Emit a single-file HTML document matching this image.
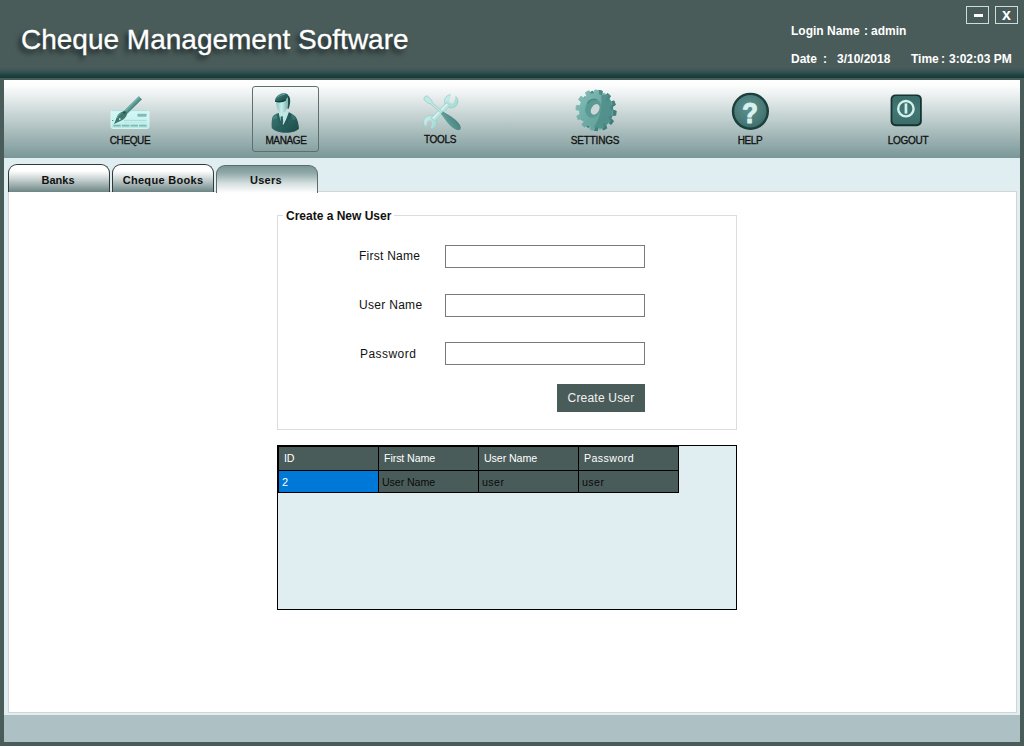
<!DOCTYPE html>
<html>
<head>
<meta charset="utf-8">
<title>Cheque Management Software</title>
<style>
html,body{margin:0;padding:0;}
body{width:1024px;height:748px;overflow:hidden;background:#fff;font-family:"Liberation Sans",Arial,sans-serif;position:relative;}
.abs{position:absolute;}
#win{position:absolute;left:0;top:0;width:1024px;height:746px;background:#4a5c5a;}
#title{position:absolute;left:21px;top:24px;font-size:28px;line-height:32px;color:#fff;white-space:nowrap;-webkit-text-stroke:0.3px #fff;text-shadow:-3px 4px 5px rgba(15,25,25,0.9);}
#band{position:absolute;left:0;top:67px;width:1024px;height:11px;background:linear-gradient(to bottom,#4a5c5a 0%,#3c5554 35%,#1a4240 80%,#133a38 100%);}
.hl{position:absolute;font-size:12px;font-weight:bold;color:#fff;line-height:14px;white-space:nowrap;}
.wbtn{position:absolute;top:6px;width:21px;height:16px;border:1px solid #cfdcdb;color:#fff;}
#toolbar{position:absolute;left:4px;top:80px;width:1016px;height:78px;background:linear-gradient(to bottom,#ffffff 0%,#fbfcfc 8%,#b9c9c9 55%,#7a9798 100%);}
.tl{position:absolute;-webkit-text-stroke:0.3px #111;font-size:10px;line-height:12px;color:#111;white-space:nowrap;text-align:center;}
#content{position:absolute;left:4px;top:158px;width:1016px;height:557px;background:#e0eef2;}
#status{position:absolute;left:4px;top:715px;width:1016px;height:27px;background:#adc0c3;}
#panel{position:absolute;left:8px;top:191px;width:1007px;height:520px;background:#fff;border:1px solid #d4d4d4;}
.tab{position:absolute;width:100px;border:1px solid #2f3a3a;border-bottom:none;border-radius:9px 9px 0 0;font-size:11px;font-weight:bold;color:#111;text-align:center;white-space:nowrap;}
.tab.in{top:164px;height:27px;line-height:30px;background:linear-gradient(to bottom,#ffffff 0%,#ffffff 22%,#c4cece 55%,#6d8585 100%);}
.tab.act{top:165px;height:27px;line-height:28px;border-color:#5d6b6b;background:linear-gradient(to bottom,#7a9697 0%,#8fa8a8 25%,#d5dfdf 65%,#ffffff 100%);}
#gb{position:absolute;left:277px;top:215px;width:458px;height:213px;border:1px solid #dcdcdc;}
#gbt{position:absolute;left:283px;top:209px;padding:0 3px;background:#fff;font-size:12px;font-weight:bold;line-height:14px;color:#111;white-space:nowrap;}
.lbl{position:absolute;font-size:12px;line-height:14px;color:#111;white-space:nowrap;letter-spacing:0.14px;}
.inp{position:absolute;left:445px;width:198px;height:21px;border:1px solid #7a7a7a;background:#fff;}
#btn{position:absolute;left:557px;top:384px;width:88px;height:28px;background:#4a5c5a;color:#f2f2f2;font-size:12px;line-height:29px;text-align:center;letter-spacing:0.2px;}
#grid{position:absolute;left:277px;top:445px;width:458px;height:163px;border:1px solid #000;background:#e0eef2;}
.gc{position:absolute;width:99px;background:#4a5c5a;font-size:10.67px;white-space:nowrap;letter-spacing:-0.1px;}
.gh{top:447px;height:23px;line-height:23px;color:#fff;padding-left:5px;width:94px;}
.gr{top:471px;height:21px;line-height:23px;color:#0a0a0a;padding-left:3px;width:96px;}
</style>
</head>
<body>
<div id="win">
  <div id="title">Cheque Management Software</div>
  <div id="band"></div>

  <div class="hl" style="left:791px;top:24px;">Login Name</div>
  <div class="hl" style="left:864px;top:24px;">:</div>
  <div class="hl" style="left:871px;top:24px;">admin</div>
  <div class="hl" style="left:791px;top:52px;">Date</div>
  <div class="hl" style="left:823px;top:52px;">:</div>
  <div class="hl" style="left:837px;top:52px;">3/10/2018</div>
  <div class="hl" style="left:911px;top:52px;">Time</div>
  <div class="hl" style="left:941px;top:52px;">:</div>
  <div class="hl" style="left:949px;top:52px;">3:02:03 PM</div>

  <div class="wbtn" style="left:966px;"><div class="abs" style="left:7px;top:6.5px;width:9px;height:3px;background:#fff;"></div></div>
  <div class="wbtn" style="left:995px;"><div class="abs" style="left:0;top:1px;width:21px;height:16px;line-height:14px;text-align:center;font-size:16px;font-weight:bold;">x</div></div>

  <div id="toolbar"></div>
  <div id="content"></div>
  <div id="status"></div>
</div>

<!-- toolbar items -->
<div class="abs" style="left:252px;top:86px;width:65px;height:64px;border:1px solid #5f6e6e;border-radius:3px;"></div>

<div class="tl" style="left:100px;top:135px;width:60px;letter-spacing:-0.4px;">CHEQUE</div>
<div class="tl" style="left:256px;top:135px;width:60px;letter-spacing:-0.35px;">MANAGE</div>
<div class="tl" style="left:410px;top:134px;width:60px;letter-spacing:-0.3px;">TOOLS</div>
<div class="tl" style="left:565px;top:135px;width:60px;letter-spacing:-0.2px;">SETTINGS</div>
<div class="tl" style="left:720px;top:135px;width:60px;letter-spacing:-0.4px;">HELP</div>
<div class="tl" style="left:878px;top:135px;width:60px;letter-spacing:-0.3px;">LOGOUT</div>

<!-- ICONS -->
<svg class="abs" style="left:0;top:80px;" width="1024" height="80" viewBox="0 80 1024 80">
<defs>
  <linearGradient id="gCard" x1="0" y1="0" x2="0" y2="1"><stop offset="0" stop-color="#d4f8f5"/><stop offset="0.6" stop-color="#c8f3ef"/><stop offset="1" stop-color="#b4e8e2"/></linearGradient>
  <linearGradient id="gPen" x1="0" y1="0" x2="1" y2="1"><stop offset="0" stop-color="#66a39e"/><stop offset="1" stop-color="#3c7772"/></linearGradient>
  <linearGradient id="gJacket" x1="0" y1="0" x2="1" y2="1"><stop offset="0" stop-color="#3f7c78"/><stop offset="0.5" stop-color="#2a615e"/><stop offset="1" stop-color="#1b4a48"/></linearGradient>
  <linearGradient id="gFace" x1="0" y1="0" x2="1" y2="0"><stop offset="0" stop-color="#8cc3be"/><stop offset="0.45" stop-color="#c4ece8"/><stop offset="1" stop-color="#7fb6b1"/></linearGradient>
  <linearGradient id="gHair" x1="0" y1="0" x2="1" y2="1"><stop offset="0" stop-color="#5c9a95"/><stop offset="0.5" stop-color="#2b6461"/><stop offset="1" stop-color="#173f3d"/></linearGradient>
  <linearGradient id="gWrench" x1="0" y1="0" x2="1" y2="1"><stop offset="0" stop-color="#d2f3f0"/><stop offset="0.5" stop-color="#b4e2de"/><stop offset="1" stop-color="#a3d6d1"/></linearGradient>
  <linearGradient id="gHandle" x1="0" y1="1" x2="1" y2="0"><stop offset="0" stop-color="#6aa7a2"/><stop offset="0.5" stop-color="#55928d"/><stop offset="1" stop-color="#477f7b"/></linearGradient>
  <linearGradient id="gGearF" x1="0" y1="0" x2="1" y2="1"><stop offset="0" stop-color="#86c0ba"/><stop offset="0.5" stop-color="#6eaba5"/><stop offset="1" stop-color="#5a9893"/></linearGradient>
  <linearGradient id="gGearB" x1="0" y1="0" x2="1" y2="1"><stop offset="0" stop-color="#5a9893"/><stop offset="1" stop-color="#3a7672"/></linearGradient>
  <radialGradient id="gHelp" cx="0.45" cy="0.4" r="0.65"><stop offset="0" stop-color="#5f918e"/><stop offset="0.7" stop-color="#477875"/><stop offset="1" stop-color="#376663"/></radialGradient>
  <linearGradient id="gLog" x1="0" y1="0" x2="0" y2="1"><stop offset="0" stop-color="#3a6c69"/><stop offset="0.5" stop-color="#437774"/><stop offset="1" stop-color="#3b6e6b"/></linearGradient>
</defs>

<!--ICON_CHEQUE-->
<g id="ic-cheque">
  <rect x="111" y="110.5" width="38" height="18" rx="1.8" fill="url(#gCard)" stroke="#dffaf7" stroke-width="0.8"/>
  <line x1="112" y1="110.6" x2="148" y2="110.6" stroke="#a5d6d1" stroke-width="0.8"/>
  <rect x="137.4" y="113.7" width="9.1" height="3" rx="0.6" fill="#82bbb6"/>
  <line x1="124" y1="120.4" x2="146.5" y2="120.4" stroke="#a3d6d1" stroke-width="0.9"/>
  <line x1="124" y1="122.4" x2="146.5" y2="122.4" stroke="#b9e5e1" stroke-width="0.7"/>
  <line x1="113.3" y1="125.6" x2="146.5" y2="125.6" stroke="#7eb7b2" stroke-width="1.7" stroke-dasharray="7.4,1.2"/>
  <rect x="112.2" y="120" width="1" height="1" fill="#3c6f6b"/>
  <line x1="140.3" y1="97.8" x2="124.6" y2="113.2" stroke="#5a9893" stroke-width="4.3" stroke-linecap="butt"/>
  <line x1="139.4" y1="96.9" x2="123.7" y2="112.3" stroke="#74b0aa" stroke-width="1.2"/>
  <line x1="141.3" y1="98.9" x2="125.6" y2="114.3" stroke="#4a8682" stroke-width="1.2"/>
  <path d="M126.6,111.6 C128.2,114.3 125.3,119.2 121.0,120.8 L114.0,123.9 L116.8,117.2 C118.4,112.8 123.2,110.0 126.6,111.6Z" fill="#40776f"/>
  <path d="M121.5,113.0 C119.5,114.0 118.0,116.0 117.4,118.0" fill="none" stroke="#6da9a4" stroke-width="0.9"/>
  <circle cx="124.3" cy="112.6" r="1.1" fill="#1f4b48"/>
  <path d="M119.2,117.9 L121.2,119.0 L119.0,120.3Z" fill="#d8f4f1"/>
</g>

<!--ICON_MANAGE-->
<g id="ic-manage">
  <!-- jacket -->
  <path d="M278.6,113.0 C275,114.0 272.8,115.4 272.2,118 C271.6,121.5 271.4,125 271.8,128 C274,130.8 280,132.8 286,132.8 C292,132.8 297,131.4 299,128.6 C298.6,124 297.6,119.5 295.8,117 C294,114.8 291,113.2 288.6,112.2 L284,120 Z" fill="url(#gJacket)"/>
  <path d="M273.2,117.6 C274.4,115.8 276.4,114.8 278.2,114.4 L279.6,118 C277,118 274.6,118.4 273.2,119.6 Z" fill="#4f8d88" opacity="0.8"/>
  <path d="M291,114.4 C293.4,115.4 295.2,116.8 296,118.8 L293,120.6 Z" fill="#3d7a76" opacity="0.8"/>
  <!-- shirt -->
  <path d="M278.8,112.4 L288.8,111.6 L289.2,114 L283.4,125 L279.2,119 Z" fill="#bfe6e2"/>
  <path d="M280.6,116.4 L282.8,116.2 L283.2,122.6 L282.2,124.4 L280.6,122.4Z" fill="#2c6461"/>
  <path d="M278.6,113 L281,122.6 L282.6,125.6 L280.4,126.4 L276.6,115.6 Z" fill="#2a615e"/>
  <path d="M288.8,112.2 L285.4,121.4 L283.2,125.6 L285.2,127 L291.6,114.4 Z" fill="#245956"/>
  <!-- face -->
  <path d="M276.4,101 C276,105.5 277,109.8 279.4,112.2 C280.8,113.6 283.2,113.4 284.6,112 C286.6,110 287.6,106.5 287.8,102.5 L285.5,99.2 L277.4,99.8 Z" fill="url(#gFace)"/>
  <!-- hair back strip -->
  <path d="M286,95 C288.6,94.6 290.2,97 290.2,100.4 C290.2,103.6 289.6,106.6 288.4,109 L287.2,108.2 C288,104.4 288.2,100.6 287.4,98 Z" fill="#1f4f4c"/>
  <!-- ear/temple -->
  <path d="M284.8,99.6 L287.2,96.6 C288.4,99.6 288.4,104.6 287.2,108.4 L285.6,108.6 C286.4,105.6 286.2,102.2 284.8,99.6 Z" fill="#83bbb6"/>
  <!-- hair cap -->
  <path d="M275.0,101.6 C274.6,98.8 277.0,95.2 281.4,93.6 C284.0,92.8 286.8,93.2 288.4,95.2 L285.4,100.4 C282.6,101.9 278.2,102.3 275.0,101.6 Z" fill="url(#gHair)"/>
  <path d="M275.2,101.2 C278.4,102.2 282.8,101.8 285.6,100.2" fill="none" stroke="#123a38" stroke-width="1.2"/>
  <path d="M277.6,97.2 C279.6,95.2 282.6,94.2 285,94.4" fill="none" stroke="#6fada8" stroke-width="1" opacity="0.8"/>
</g>

<!--ICON_TOOLS-->
<g id="ic-tools" transform="translate(0.6,1.3)">
  <mask id="mW" maskUnits="userSpaceOnUse" x="415" y="85" width="55" height="55">
    <rect x="415" y="85" width="55" height="55" fill="#fff"/>
    <path d="M-2.5,-14 L2.5,-14 L2.5,0 A2.5,2.5 0 0 1 -2.5,0 Z" transform="translate(451.2,99.6) rotate(14)" fill="#000"/>
    <path d="M-2.5,-14 L2.5,-14 L2.5,0 A2.5,2.5 0 0 1 -2.5,0 Z" transform="translate(429.0,121.6) rotate(194)" fill="#000"/>
  </mask>
  <g mask="url(#mW)">
    <circle cx="450.6" cy="100.0" r="6.7" fill="url(#gWrench)" stroke="#93c8c3" stroke-width="0.7"/>
    <circle cx="429.6" cy="121.0" r="6.7" fill="url(#gWrench)" stroke="#93c8c3" stroke-width="0.7"/>
    <path d="M446.2,101.0 L449.6,104.4 L434.0,120.0 L430.6,116.6 Z" fill="#b7e4e0" stroke="#93c8c3" stroke-width="0.6"/>
    <path d="M446.6,102.6 L432.2,117.0" stroke="#dbf6f3" stroke-width="1.4" fill="none"/>
  </g>
  <g transform="translate(441.8,111.8) rotate(42.5)">
    <path d="M-23.8,-1.4 L-22.6,-2.5 L-17,-2.4 L-14.6,-1 L0,-1 L0,1 L-14.6,1 L-17,2.4 L-22.6,2.5 L-23.8,1.4 Z" fill="#bfe9e5" stroke="#8fc4bf" stroke-width="0.6"/>
    <path d="M-0.6,-1.5 C3,-2.2 7,-3.2 12,-3.8 C17.5,-4.4 24.2,-3.3 24.2,0 C24.2,3.3 17.5,4.4 12,3.8 C7,3.2 3,2.2 -0.6,1.5 Z" fill="url(#gHandle)"/>
  </g>
</g>

<!--ICON_SETTINGS-->
<g id="ic-gear">
  <path d="M612.8,110.2 L616.2,111.1 L615.7,115.3 L612.2,115.2 L611.0,118.5 L613.5,121.1 L611.2,124.5 L608.3,122.4 L605.7,124.6 L606.7,128.3 L603.2,130.0 L601.5,126.5 L598.3,127.0 L597.5,130.8 L593.8,130.2 L593.9,126.4 L590.9,125.0 L588.5,127.8 L585.5,125.3 L587.3,122.0 L585.3,119.1 L582.0,120.3 L580.6,116.4 L583.6,114.5 L583.2,111.0 L579.8,110.1 L580.3,105.9 L583.8,106.0 L585.0,102.7 L582.5,100.1 L584.8,96.7 L587.7,98.8 L590.3,96.6 L589.3,92.9 L592.8,91.2 L594.5,94.7 L597.7,94.2 L598.5,90.4 L602.2,91.0 L602.1,94.8 L605.1,96.2 L607.5,93.4 L610.5,95.9 L608.7,99.2 L610.7,102.1 L614.0,100.9 L615.4,104.8 L612.4,106.7Z" fill="url(#gGearB)" stroke="#3f7b77" stroke-width="1" stroke-linejoin="round"/>
  <path d="M609.2,109.8 L612.7,110.7 L612.2,114.9 L608.6,114.8 L607.4,118.1 L610.0,120.8 L607.7,124.2 L604.6,122.1 L602.0,124.3 L603.1,128.0 L599.5,129.7 L597.9,126.2 L594.6,126.7 L593.8,130.5 L590.0,129.9 L590.2,126.0 L587.1,124.7 L584.7,127.5 L581.6,124.9 L583.6,121.6 L581.6,118.8 L578.1,119.9 L576.7,116.0 L579.8,114.2 L579.4,110.6 L575.9,109.7 L576.4,105.5 L580.0,105.6 L581.2,102.3 L578.6,99.6 L580.9,96.2 L584.0,98.3 L586.6,96.1 L585.5,92.4 L589.1,90.7 L590.7,94.2 L594.0,93.7 L594.8,89.9 L598.6,90.5 L598.4,94.4 L601.5,95.7 L603.9,92.9 L607.0,95.5 L605.0,98.8 L607.0,101.6 L610.5,100.5 L611.9,104.4 L608.8,106.2Z" fill="url(#gGearF)" stroke="#7ab6b0" stroke-width="0.8" stroke-linejoin="round"/>
  <path d="M593.6,127.2 C599.5,120 602.5,108 601.2,95.6 L606.6,94.6 L611.0,101.0 L612.8,111.4 L609.8,121.4 L602.6,128.6 Z" fill="#4d8c87" opacity="0.8"/>
  <ellipse cx="593.2" cy="108.4" rx="7.8" ry="9.6" transform="rotate(24 593.2 108.4)" fill="#5b9994"/>
  <path d="M587.4,103.6 C589.4,99.8 593.4,98.4 596.8,99.8" fill="none" stroke="#4a8883" stroke-width="1.4"/>
  <ellipse cx="595.2" cy="109.4" rx="3.9" ry="5.7" transform="rotate(30 595.2 109.4)" fill="#ccd8d8"/>
</g>

<!--ICON_HELP-->
<g id="ic-help">
  <circle cx="750.4" cy="111.3" r="17.4" fill="url(#gHelp)" stroke="#1a3f3c" stroke-width="2.4"/>
  <text transform="translate(750.1,112.6) scale(0.95,1.07)" x="0" y="9.6" text-anchor="middle" font-family="'Liberation Sans',Arial,sans-serif" font-weight="bold" font-size="27" fill="#d9f1ee" stroke="#d9f1ee" stroke-width="1.1" stroke-linejoin="round">?</text>
</g>

<!--ICON_LOGOUT-->
<g id="ic-logout">
  <rect x="890.6" y="94.4" width="31.2" height="31.8" rx="5" fill="#153431"/>
  <rect x="892.4" y="96.0" width="27.6" height="28.2" rx="3.6" fill="url(#gLog)"/>
  <circle cx="905.9" cy="108.7" r="7.7" fill="none" stroke="#d3f1ed" stroke-width="2.4"/>
  <rect x="904.6" y="103.4" width="2.7" height="10.2" fill="#d3f1ed"/>
</g>
</svg>

<!-- tabs -->
<div id="panel"></div>
<div class="tab in" style="left:8px;text-indent:-2px;">Banks</div>
<div class="tab in" style="left:112px;letter-spacing:0.3px;">Cheque Books</div>
<div class="tab act" style="left:216px;text-indent:-2px;letter-spacing:0.3px;">Users</div>

<!-- group box -->
<div id="gb"></div>
<div id="gbt">Create a New User</div>
<div class="lbl" style="left:359px;top:249px;letter-spacing:0.25px;">First Name</div>
<div class="lbl" style="left:359px;top:298px;letter-spacing:0.3px;">User Name</div>
<div class="lbl" style="left:360px;top:347px;letter-spacing:0.45px;">Password</div>
<div class="inp" style="top:245px;"></div>
<div class="inp" style="top:294px;"></div>
<div class="inp" style="top:342px;"></div>
<div id="btn">Create User</div>

<!-- grid -->
<div id="grid"></div>
<div class="abs" style="left:278px;top:446px;width:401px;height:47px;background:#000;"></div>
<div class="gc gh" style="left:279px;">ID</div>
<div class="gc gh" style="left:379px;">First Name</div>
<div class="gc gh" style="left:479px;">User Name</div>
<div class="gc gh" style="left:579px;letter-spacing:0.4px;">Password</div>
<div class="gc gr" style="left:279px;background:#0078d7;color:#fff;font-size:11px;">2</div>
<div class="gc gr" style="left:379px;">User Name</div>
<div class="gc gr" style="left:479px;letter-spacing:0.4px;">user</div>
<div class="gc gr" style="left:579px;letter-spacing:0.4px;">user</div>
</body>
</html>
